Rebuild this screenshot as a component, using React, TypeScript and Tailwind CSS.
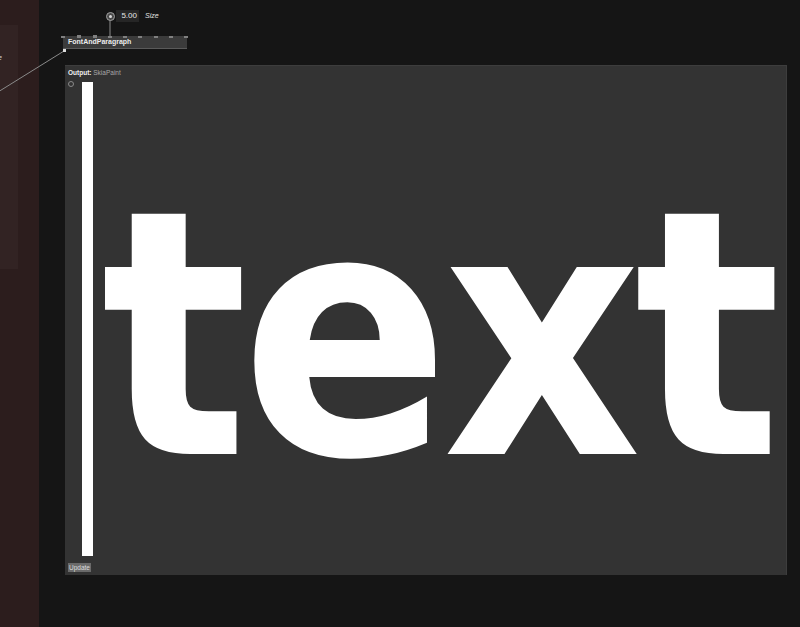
import React from "react";

const pins = [63, 79, 95, 110, 125, 140, 156, 171, 186];
const smallFont = { fontFamily: '"Liberation Sans", Arial, sans-serif' };

function SizeInput() {
  return (
    <div className="absolute left-[67px] top-[10px] flex items-center" style={smallFont}>
      <div className="h-[9px] w-[9px] rounded-full border border-[#a0a0a0] bg-[#4a4a4a] flex items-center justify-center">
        <div className="h-[3px] w-[3px] rounded-full bg-[#dcdcdc]" />
      </div>
      <div className="ml-[1px] h-[12px] w-[23px] bg-[#262626] text-right pr-[2px] text-[8px] leading-[12px] text-[#e6e6e6]">
        5.00
      </div>
      <span className="ml-[6px] text-[7px] italic text-[#e0e0e0]">Size</span>
    </div>
  );
}

function FontNode() {
  return (
    <div className="absolute left-[24px] top-[36px] w-[124px]" style={smallFont}>
      <div className="h-[13px] bg-[#3b3b3b] border-b border-[#5a5a5a] pl-[5px] text-[7px] font-bold leading-[12px] text-[#ececec]">
        FontAndParagraph
      </div>
      {pins.map((x, i) => (
        <div
          key={x}
          className={
            i === 1 || i === 2
              ? "absolute top-[-1px] h-[3px] w-[4px] bg-[#808080]"
              : "absolute top-[0px] h-[2px] w-[4px] bg-[#808080]"
          }
          style={{ left: x - 63 - 2 }}
        />
      ))}
      <div className="absolute left-[0px] top-[13px] h-[3px] w-[3px] bg-[#dcdcdc]" />
    </div>
  );
}

export default function App() {
  return (
    <div
      className="flex h-[627px] w-[800px] overflow-hidden bg-[#151515]"
      style={{ fontFamily: '"DejaVu Sans", "Liberation Sans", sans-serif' }}
    >
      {/* left inspector */}
      <div className="w-[39px] shrink-0 bg-[#2c1d1d] pt-[25px]">
        <div className="relative h-[244px] w-[18px] bg-[#322323]">
          <span className="absolute left-[-2px] top-[28px] text-[7px] italic text-[#d0d0d0]" style={smallFont}>
            e
          </span>
        </div>
      </div>

      {/* patch canvas */}
      <div className="relative flex-1">
        <svg className="absolute left-[-39px] top-0 h-[627px] w-[800px] pointer-events-none" viewBox="0 0 800 627">
          <line x1="110" y1="20" x2="110" y2="36" stroke="#8c8c8c" strokeWidth="1" />
          <line x1="64" y1="51" x2="-2" y2="92" stroke="#8a8a8a" strokeWidth="1" />
        </svg>
        <SizeInput />
        <FontNode />

        <div className="ml-[26px] mt-[65px] h-[510px] w-[722px] border-r border-t border-[#3d3d3d] bg-[#333333] flex flex-col">
          <div className="pl-[3px] pt-[2px] text-[6.5px] leading-[10px]" style={smallFont}>
            <span className="font-bold text-[#f0f0f0]">Output: </span>
            <span className="text-[#a8a8a8]">SkiaPaint</span>
          </div>
          <div className="flex flex-1 min-h-0 pt-[4px]">
            <div className="w-[17px] shrink-0 pl-[3px] -mt-[1px]">
              <div className="h-[6px] w-[6px] rounded-full border border-[#8a8a8a]" />
            </div>
            <div className="h-[474px] w-[11px] shrink-0 bg-white" />
            <div className="flex-1 overflow-hidden">
              <div
                className="mt-[83px] ml-[8px] whitespace-nowrap text-[342px] font-bold leading-none tracking-[-7px] text-white"
                style={{ fontFamily: '"DejaVu Sans Condensed", "DejaVu Sans", sans-serif' }}
              >
                text
              </div>
            </div>
          </div>
          <div className="flex pl-[3px] pb-[3px] pt-[6px]" style={smallFont}>
            <div className="h-[9px] bg-[#6a6a6a] px-[1px] text-[6.5px] leading-[9px] text-[#dcdcdc]">
              Update
            </div>
          </div>
        </div>
      </div>
    </div>
  );
}
